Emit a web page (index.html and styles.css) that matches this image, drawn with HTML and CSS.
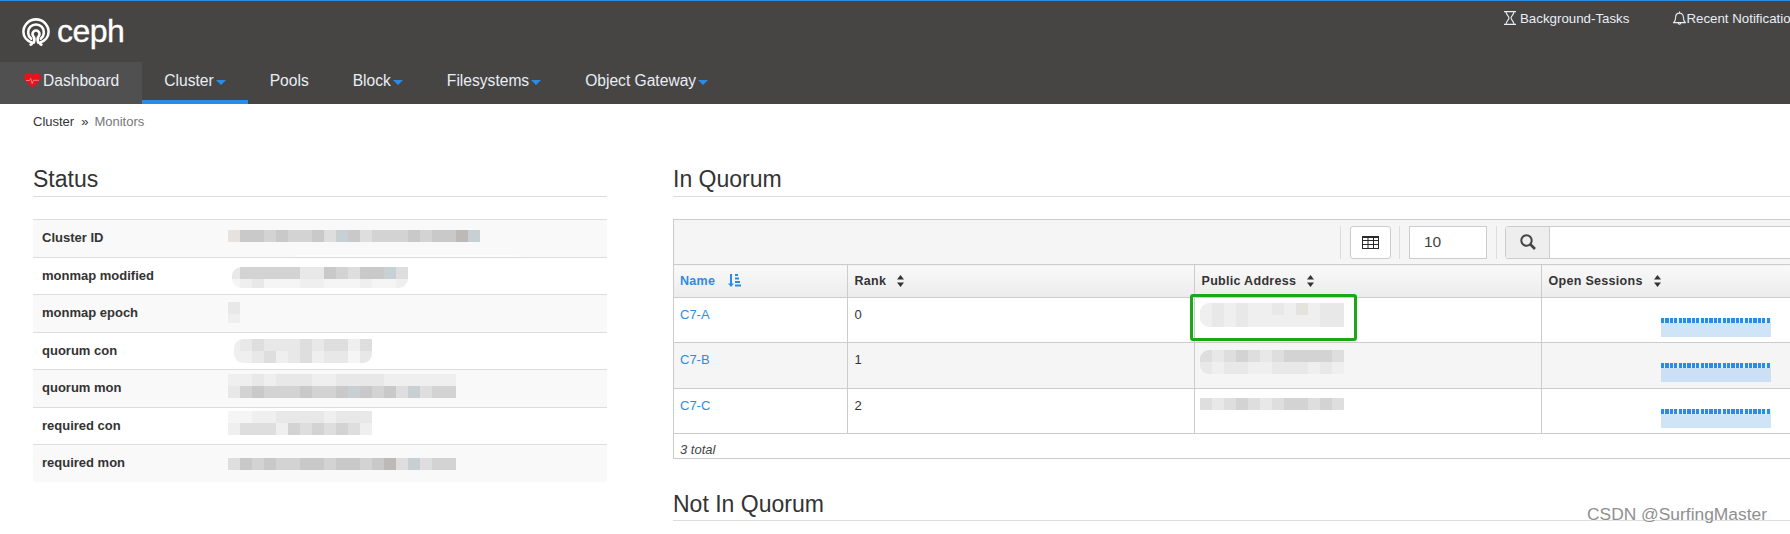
FILE: index.html
```html
<!DOCTYPE html>
<html lang="en">
<head>
<meta charset="utf-8">
<title>Ceph Dashboard - Monitors</title>
<link rel="stylesheet" href="styles.css">
</head>
<body>
<header class="topbar">
  <div class="brandrow">
    <a class="brand">
      <svg class="brand-icon" viewBox="0 0 28 28" fill="none" stroke="#fff" stroke-width="2.6" stroke-linecap="round">
        <path d="M8.6 26.6c1.2-.2 1.7-1.1 1.2-2.1C5 22.700 1.400 18.600 1.400 14A12.600 12.600 0 0 1 26.600 14c0 4.600-3.600 8.700-8.400 10.500-.5 1 0 1.900 1.200 2.100"/>
        <path d="M9.200 20.600A7.900 7.900 0 1 1 18.800 20.600"/>
        <path d="M11.800 24.600c1-2.600 1-4.300-.2-6a3.500 3.500 0 1 1 4.800 0c-1.200 1.700-1.200 3.400-.2 6"/>
      </svg>
      <span class="brand-name">ceph</span>
    </a>
    <div class="utility">
      <a class="utility-link tasks">
        <svg class="hourglass" viewBox="0 0 12 14" fill="none" stroke="#e8eef5" stroke-width="1.100"><path d="M0 .6h12M0 13.400h12M2 .6c0 3.400 3 4.400 3 6.400s-3 3-3 6.400M10 .6c0 3.400-3 4.400-3 6.400s3 3 3 6.400"/></svg>
        <span>Background-Tasks</span>
      </a>
      <a class="utility-link">
        <svg class="bell" viewBox="0 0 13 14" fill="none" stroke="#e8eef5" stroke-width="1.100"><path d="M.6 11.600c1.500-1.300 2-2.600 2-5.100 0-2.600 1.600-4.400 3.900-4.400s3.900 1.800 3.900 4.400c0 2.500.5 3.800 2 5.100zM6.500 .4v1.700M5.200 12c0 1.700 2.600 1.700 2.600 0"/></svg>
        <span>Recent Notifications</span>
      </a>
    </div>
  </div>
  <nav class="nav">
    <a class="nav-item dash">
      <svg class="heart" viewBox="0 0 17 15"><path fill="#e8121c" d="M8.500 15 1.200 7.600C-.6 5.600-.3 2.400 1.600 1 3.700-.6 6.800-.2 8.500 2.100 10.200-.2 13.300-.6 15.400 1c1.900 1.400 2.200 4.600.4 6.600z"/><path fill="none" stroke="#f0a8a8" stroke-width=".7" d="M2 7.500h3.500l1.200-2 1.500 5 1.300-3.200h5.500"/></svg>Dashboard</a>
    <a class="nav-item active">Cluster<i class="caret"></i></a>
    <a class="nav-item">Pools</a>
    <a class="nav-item">Block<i class="caret"></i></a>
    <a class="nav-item">Filesystems<i class="caret"></i></a>
    <a class="nav-item">Object Gateway<i class="caret"></i></a>
  </nav>
</header>

<div class="breadcrumb"><a>Cluster</a><span class="sep">&raquo;</span><span class="current">Monitors</span></div>

<main class="content">
  <section class="status">
    <h2 class="section-title">Status</h2>
    <div class="kv">
      <div class="kv-row"><span class="kv-key">Cluster ID</span>
        <span class="mosaic t10"><span class="mrow"><i class="a"></i><i class="b"></i><i class="b"></i><i class="c"></i><i class="b"></i><i class="c"></i><i class="c"></i><i class="b"></i><i class="d"></i><i class="j"></i><i class="b"></i><i class="d"></i><i class="c"></i><i class="c"></i><i class="c"></i><i class="b"></i><i class="c"></i><i class="b"></i><i class="b"></i><i class="g"></i><i class="j"></i></span></span>
        <span class="smear"></span>
      </div>
      <div class="kv-row"><span class="kv-key">monmap modified</span>
        <span class="mosaic t8 l1 soft"><span class="mrow"><i class="e"></i><i class="c"></i><i class="c"></i><i class="c"></i><i class="c"></i><i class="c"></i><i class="e"></i><i class="e"></i><i class="b"></i><i class="c"></i><i class="d"></i><i class="b"></i><i class="b"></i><i class="j"></i><i class="d"></i></span><span class="mrow short"><i class="h"></i><i class="f"></i><i class="e"></i><i class="h"></i><i class="h"></i><i class="h"></i><i class="f"></i><i class="f"></i><i class="h"></i><i class="h"></i><i class="h"></i><i class="f"></i><i class="h"></i><i class="h"></i><i class="f"></i></span></span>
      </div>
      <div class="kv-row"><span class="kv-key">monmap epoch</span>
        <span class="mosaic t7"><span class="mrow"><i class="e"></i></span><span class="mrow short"><i class="f"></i></span></span>
      </div>
      <div class="kv-row"><span class="kv-key">quorum con</span>
        <span class="mosaic t6 l2 soft"><span class="mrow"><i class="f"></i><i class="e"></i><i class="d"></i><i class="e"></i><i class="e"></i><i class="e"></i><i class="d"></i><i class="e"></i><i class="d"></i><i class="d"></i><i class="f"></i><i class="d"></i></span><span class="mrow"><i class="f"></i><i class="f"></i><i class="e"></i><i class="d"></i><i class="f"></i><i class="e"></i><i class="d"></i><i class="f"></i><i class="e"></i><i class="e"></i><i class="h"></i><i class="e"></i></span></span>
      </div>
      <div class="kv-row"><span class="kv-key">quorum mon</span>
        <span class="mosaic t5"><span class="mrow"><i class="f"></i><i class="f"></i><i class="e"></i><i class="f"></i><i class="e"></i><i class="e"></i><i class="e"></i><i class="f"></i><i class="f"></i><i class="e"></i><i class="e"></i><i class="e"></i><i class="e"></i><i class="f"></i><i class="f"></i><i class="f"></i><i class="f"></i><i class="f"></i><i class="f"></i></span><span class="mrow"><i class="e"></i><i class="c"></i><i class="b"></i><i class="c"></i><i class="c"></i><i class="c"></i><i class="b"></i><i class="c"></i><i class="c"></i><i class="b"></i><i class="j"></i><i class="b"></i><i class="c"></i><i class="b"></i><i class="d"></i><i class="j"></i><i class="d"></i><i class="c"></i><i class="c"></i></span></span>
      </div>
      <div class="kv-row"><span class="kv-key">required con</span>
        <span class="mosaic t3"><span class="mrow"><i class="h"></i><i class="h"></i><i class="f"></i><i class="f"></i><i class="e"></i><i class="e"></i><i class="e"></i><i class="e"></i><i class="f"></i><i class="e"></i><i class="e"></i><i class="e"></i></span><span class="mrow"><i class="f"></i><i class="d"></i><i class="d"></i><i class="d"></i><i class="f"></i><i class="c"></i><i class="d"></i><i class="c"></i><i class="d"></i><i class="c"></i><i class="d"></i><i class="f"></i></span></span>
      </div>
      <div class="kv-row last"><span class="kv-key">required mon</span>
        <span class="mosaic t13"><span class="mrow"><i class="d"></i><i class="b"></i><i class="c"></i><i class="b"></i><i class="c"></i><i class="c"></i><i class="b"></i><i class="b"></i><i class="c"></i><i class="b"></i><i class="b"></i><i class="c"></i><i class="b"></i><i class="g"></i><i class="d"></i><i class="j"></i><i class="d"></i><i class="c"></i><i class="c"></i></span></span>
      </div>
    </div>
  </section>

  <section class="quorum">
    <h2 class="section-title">In Quorum</h2>
    <div class="panel">
      <div class="toolbar">
        <button class="tool-btn"><svg class="table-icon" viewBox="0 0 17 13" fill="none" stroke="#2a2a2a"><path stroke-width="2" d="M0 1h17"/><path d="M.5 0v13M6 0v13M11.500 0v13M16.500 0v13M0 4.500h17M0 8.500h17M0 12.500h17"/></svg></button>
        <input class="page-size" value="10">
        <div class="search">
          <span class="search-addon"><svg class="search-icon" viewBox="0 0 16 16" fill="none" stroke="#444" stroke-width="2"><circle cx="6.500" cy="6.500" r="5.200"/><path stroke-width="2.600" d="M10.500 10.500 15 15"/></svg></span>
          <input class="search-input">
        </div>
      </div>
      <table class="grid">
        <colgroup><col class="c-name"><col class="c-rank"><col class="c-addr"><col></colgroup>
        <thead>
          <tr>
            <th class="sorted">Name<svg class="amount" viewBox="0 0 13 13"><path fill="#2b8ce8" d="M2 0h2v9.500h2L3 13 0 9.500h2zM7 0h3v2H7zM7 3.500h4v2H7zM7 7h5v2H7zM7 10.500h6v2H7z"/></svg></th>
            <th>Rank<svg class="sort" viewBox="0 0 7 12"><path fill="#333" d="M3.500 0 7 4.500H0zM3.500 12 0 7.500h7z"/></svg></th>
            <th>Public Address<svg class="sort" viewBox="0 0 7 12"><path fill="#333" d="M3.500 0 7 4.500H0zM3.500 12 0 7.500h7z"/></svg></th>
            <th>Open Sessions<svg class="sort" viewBox="0 0 7 12"><path fill="#333" d="M3.500 0 7 4.500H0zM3.500 12 0 7.500h7z"/></svg></th>
          </tr>
        </thead>
        <tbody>
          <tr class="r45">
            <td><a class="link">C7-A</a></td><td>0</td>
            <td class="addr">
              <span class="mosaic addr-m soft"><span class="mrow"><i class="f"></i><i class="e"></i><i class="f"></i><i class="e"></i><i class="f"></i><i class="f"></i><i class="e"></i><i class="f"></i><i class="a"></i><i class="f"></i><i class="e"></i><i class="e"></i></span><span class="mrow"><i class="f"></i><i class="e"></i><i class="f"></i><i class="e"></i><i class="f"></i><i class="f"></i><i class="f"></i><i class="f"></i><i class="f"></i><i class="f"></i><i class="e"></i><i class="e"></i></span></span>
              <span class="annotation"></span>
            </td>
            <td><span class="spark"></span></td>
          </tr>
          <tr class="r46 alt">
            <td><a class="link">C7-B</a></td><td>1</td>
            <td class="addr">
              <span class="mosaic addr-m soft mid"><span class="mrow"><i class="d"></i><i class="e"></i><i class="d"></i><i class="c"></i><i class="d"></i><i class="e"></i><i class="d"></i><i class="c"></i><i class="c"></i><i class="c"></i><i class="c"></i><i class="d"></i></span><span class="mrow"><i class="e"></i><i class="f"></i><i class="e"></i><i class="e"></i><i class="f"></i><i class="f"></i><i class="e"></i><i class="e"></i><i class="e"></i><i class="f"></i><i class="e"></i><i class="f"></i></span></span>
            </td>
            <td><span class="spark alt"></span></td>
          </tr>
          <tr class="r45">
            <td><a class="link">C7-C</a></td><td>2</td>
            <td class="addr">
              <span class="mosaic addr-m low"><span class="mrow"><i class="d"></i><i class="e"></i><i class="d"></i><i class="c"></i><i class="d"></i><i class="e"></i><i class="d"></i><i class="c"></i><i class="c"></i><i class="d"></i><i class="c"></i><i class="d"></i></span></span>
            </td>
            <td><span class="spark"></span></td>
          </tr>
        </tbody>
      </table>
      <div class="panel-foot">3 total</div>
    </div>
    <h2 class="section-title next">Not In Quorum</h2>
  </section>
</main>

<div class="watermark">CSDN @SurfingMaster</div>
</body>
</html>
```
FILE: styles.css
```css
* { box-sizing: border-box; }
html, body { margin: 0; height: 534px; overflow: hidden; background: #fff; }
body { font-family: "Liberation Sans", Arial, sans-serif; font-size: 13px; color: #333; position: relative; }

/* header */
.topbar { background: #474544; border-top: 1px solid #2b8ce8; height: 104px; color: #e8eef5; }
.brandrow { height: 61px; display: flex; justify-content: space-between; }
.brand { display: flex; align-items: flex-start; padding: 17px 0 0 22px; gap: 7px; color: #fff; }
.brand-icon { width: 28px; height: 28px; }
.brand-name { font-size: 32px; line-height: 30px; margin-top: -2px; letter-spacing: -.5px; -webkit-text-stroke: .3px #fff; }
.utility { display: flex; gap: 44px; width: 286px; flex: none; padding-top: 9px; white-space: nowrap; font-size: 13.300px; }
.utility-link { display: flex; height: 16px; align-items: center; }
.tasks { gap: 4px; }
.hourglass { width: 12px; height: 14px; }
.bell { width: 13px; height: 14px; }
.nav { display: flex; height: 42px; font-size: 15.600px; }
.nav-item { padding: 0 22px 5px; display: flex; align-items: center; white-space: nowrap; }
.dash { background: #505050; padding-left: 24px; padding-right: 23px; }
.heart { width: 17px; height: 15px; margin-right: 2px; flex: none; }
.active { border-bottom: 4px solid #2b8ce8; padding-bottom: 1px; }
.caret { width: 0; height: 0; margin: 4px 0 0 2px; border-left: 5px solid transparent; border-right: 5px solid transparent; border-top: 5px solid #2b8ce8; }

/* breadcrumb */
.breadcrumb { display: flex; height: 36px; padding: 10px 0 0 33px; font-size: 13px; line-height: 15px; color: #333; }
.sep { margin: 0 6px 0 7px; }
.current { color: #777; }

/* layout */
.content { display: grid; grid-template-columns: 574px 1200px; column-gap: 66px; padding-left: 33px; }
.section-title { margin: 0; height: 57px; padding-top: 26px; border-bottom: 1px solid #ddd; font-size: 23px; font-weight: 400; line-height: 26px; color: #333; }

/* status */
.kv { margin-top: 22px; }
.kv-row { position: relative; display: flex; height: 37.500px; border-top: 1px solid #ddd; }
.kv-row:nth-child(odd) { background: #f9f9f9; }
.kv-key { width: 195px; padding: 9px 0 0 9px; flex: none; font-weight: 700; line-height: 18px; font-size: 13px; color: #333; }
.mosaic { display: flex; flex-direction: column; align-self: flex-start; overflow: hidden; }
.mrow { display: flex; height: 12px; }
.mrow.short { height: 9px; }
.mrow i { display: block; width: 12px; height: 100%; }
.soft { border-radius: 9px 0 9px 9px; }
.t3 { margin-top: 3px; } .t5 { margin-top: 4px; } .t6 { margin-top: 6px; } .t7 { margin-top: 7px; } .t8 { margin-top: 9px; } .t10 { margin-top: 10px; } .t13 { margin-top: 13px; }
.l1 { margin-left: 4px; }
.l2 { margin-left: 6px; }
.l1 .mrow i:first-child { width: 8px; }
.l2 .mrow i:first-child { width: 6px; }
.a { background: #e6e3df; } .b { background: #c9c9c9; } .c { background: #d3d3d3; } .d { background: #dedede; }
.e { background: #e8e8e8; } .f { background: #efefef; } .g { background: #bcb9b9; } .h { background: #f5f5f5; } .j { background: #c8d0d4; }
.smear { position: absolute; left: 261px; bottom: -2px; width: 227px; height: 4px; border-radius: 3px; background: #fcfcfc; }

/* panel */
.panel { margin-top: 22px; border: 1px solid #ccc; height: 240px; }
.toolbar { display: flex; align-items: center; height: 44px; padding-left: 676px; background: #f5f5f5; }
.tool-btn { width: 41px; height: 33px; padding: 0; margin-right: 18px; background: #fff; border: 1px solid #ccc; border-radius: 3px; display: flex; align-items: center; justify-content: center; position: relative; }
.tool-btn::before, .tool-btn::after { content: ""; position: absolute; top: -1px; height: 33px; width: 1px; background: #ddd; }
.tool-btn::before { left: -11px; }
.tool-btn::after { right: -10px; }
.table-icon { width: 17px; height: 13px; }
.page-size { width: 78px; height: 33px; margin-right: 18px; padding: 0 0 0 14px; border: 1px solid #ccc; background: #fff; font: 15.500px "Liberation Sans", Arial, sans-serif; color: #444; }
.search { position: relative; display: flex; flex: 1; height: 33px; border: 1px solid #ccc; border-radius: 3px; background: #fff; }
.search::before { content: ""; position: absolute; left: -10px; top: -1px; width: 1px; height: 33px; background: #ddd; }
.search-addon { width: 44px; flex: none; display: flex; align-items: center; justify-content: center; background: #eee; border-right: 1px solid #ccc; }
.search-icon { width: 16px; height: 16px; }
.search-input { flex: 1; border: 0; background: transparent; }

/* table */
.grid { width: 100%; border-collapse: collapse; table-layout: fixed; font-size: 13px; }
.c-name { width: 173px; } .c-rank { width: 347px; } .c-addr { width: 347px; }
.grid th { height: 33px; padding: 0 7px; text-align: left; font-weight: 700; font-size: 12.500px; letter-spacing: .3px; border: 1px solid #ccc; background: linear-gradient(#f9f9f9, #ececec); white-space: nowrap; }
.grid th:first-child, .grid td:first-child { border-left: 0; padding-left: 6px; }
.sorted { color: #2b8ce8; }
.amount { width: 13px; height: 13px; margin-left: 13px; vertical-align: -2px; }
.sort { width: 7px; height: 12px; margin-left: 11px; vertical-align: -2px; }
.grid td { padding: 9px 7px 0; vertical-align: top; line-height: 16px; border: 1px solid #ccc; }
.r45 td { height: 45px; }
.r46 td { height: 46px; }
.alt td { background: #f5f5f5; }
.link { color: #2b8ce8; }
.grid td.addr { position: relative; padding-top: 5px; }
.addr-m { margin-left: -2px; }
.mid { margin-top: 2px; }
.low { margin-top: 4px; }
.annotation { position: absolute; left: -5px; top: -4px; width: 167px; height: 47px; border: 3px solid #1aa81a; border-radius: 3px; }
.spark { display: block; width: 110px; height: 19px; margin: 11px 0 0 112px; background: linear-gradient(#fff0 0, #fff0 5px, #d0e4f8 5px), repeating-linear-gradient(90deg, #2b8ce8 0 3.200px, #e4f0fc 3.200px 4.400px); }
.spark.alt { background: linear-gradient(#fff0 0, #fff0 5px, #cbe0f5 5px), repeating-linear-gradient(90deg, #2b8ce8 0 3.200px, #e4f0fc 3.200px 4.400px); }
.panel-foot { height: 25px; padding: 8px 6px 0; font-size: 13px; font-style: italic; line-height: 15px; color: #444; border-top: 1px solid #ccc; margin-top: -1px; }
.next { margin-top: 5px; padding-top: 27px; }

.watermark { position: absolute; left: 1587px; top: 503px; font-size: 17.400px; line-height: 22px; color: #8f8f8f; text-shadow: 0 0 2px #fff; white-space: nowrap; }
```
